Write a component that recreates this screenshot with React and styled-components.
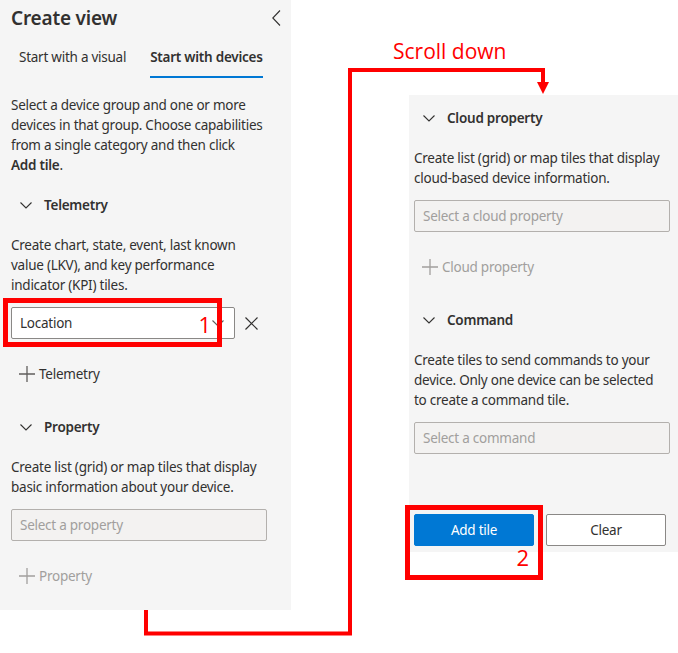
import styled, { createGlobalStyle } from 'styled-components'

const GlobalStyle = createGlobalStyle`
  html, body {
    margin: 0;
    padding: 0;
    background: #FFFFFF;
  }
  body {
    font-family: 'Noto Sans', 'Open Sans', sans-serif;
    color: #323130;
  }
`

const Canvas = styled.div`
  position: relative;
  width: 678px;
  height: 653px;
  display: flex;
  align-items: flex-start;
  overflow: hidden;
`

const LeftPanel = styled.div`
  width: 291px;
  height: 610px;
  background: #F5F5F5;
  padding: 0 10px 0 11px;
  box-sizing: border-box;
  display: flex;
  flex-direction: column;
`

const RightPanel = styled.div`
  width: 269px;
  height: 457px;
  margin-left: 118px;
  margin-top: 95px;
  background: #F5F5F5;
  padding: 0 8px 0 5px;
  box-sizing: border-box;
  display: flex;
  flex-direction: column;
`

const TitleRow = styled.div`
  height: 36px;
  display: flex;
  align-items: center;
  justify-content: space-between;
`

const Title = styled.div`
  font-size: 19px;
  font-weight: 600;
  letter-spacing: -0.2px;
  line-height: 24px;
  color: #323130;
`

const TabList = styled.div`
  margin-top: 4px;
  display: flex;
  gap: 24px;
  padding-left: 8px;
`

const Tab = styled.div`
  padding-top: 7px;
  padding-bottom: 9px;
  font-size: 13.5px;
  letter-spacing: -0.25px;
  line-height: 20px;
  font-weight: ${props => props.$active ? 600 : 400};
  border-bottom: 2px solid ${props => props.$active ? '#0078D4' : 'transparent'};
  white-space: nowrap;
`

const Text = styled.p`
  margin: ${props => props.$top || 10}px 0 0 0;
  font-size: 13.5px;
  letter-spacing: -0.25px;
  line-height: 20px;
  color: #323130;
  white-space: nowrap;

  b {
    font-weight: 600;
  }
`

const SectionHeader = styled.div`
  height: 40px;
  margin-top: ${props => props.$top ?? 10}px;
  display: flex;
  align-items: center;
  gap: 12px;
  padding-left: 9px;
  font-size: 13.5px;
  letter-spacing: -0.25px;
  font-weight: 600;
  color: #323130;
`

const ChevronBox = styled.div`
  width: 12px;
  display: flex;
  align-items: center;
`

const FieldRow = styled.div`
  position: relative;
  margin-top: 12px;
  display: flex;
  align-items: center;
  gap: 10px;
`

const Dropdown = styled.div`
  width: ${props => props.$width}px;
  height: 32px;
  box-sizing: border-box;
  border: 1px solid ${props => props.$disabled ? '#B3B0AD' : '#8A8886'};
  border-radius: 2px;
  background: ${props => props.$disabled ? '#F3F2F1' : '#FFFFFF'};
  color: ${props => props.$disabled ? '#A19F9D' : '#323130'};
  font-size: 13.5px;
  letter-spacing: -0.25px;
  display: flex;
  align-items: center;
  justify-content: space-between;
  padding: 0 10px 0 8px;
`

const AddRow = styled.div`
  height: 40px;
  margin-top: 15px;
  margin-bottom: 3px;
  padding-left: 8px;
  display: flex;
  align-items: center;
  gap: 4px;
  font-size: 13.5px;
  letter-spacing: -0.25px;
  color: ${props => props.$disabled ? '#A19F9D' : '#323130'};
`

const ButtonRow = styled.div`
  margin-top: 60px;
  display: flex;
  gap: 12px;
`

const ButtonWrap = styled.div`
  position: relative;
`

const Button = styled.div`
  width: 120px;
  height: 32px;
  box-sizing: border-box;
  border-radius: 2px;
  display: flex;
  align-items: center;
  justify-content: center;
  font-size: 13.5px;
  letter-spacing: -0.25px;
  background: ${props => props.$primary ? '#0078D4' : '#FFFFFF'};
  color: ${props => props.$primary ? '#FFFFFF' : '#323130'};
  border: 1px solid ${props => props.$primary ? '#0078D4' : '#8A8886'};
`

const Highlight = styled.div`
  position: absolute;
  left: ${props => props.$left}px;
  top: ${props => props.$top}px;
  width: ${props => props.$width}px;
  height: ${props => props.$height}px;
  border: 5px solid #FF0000;
  box-sizing: border-box;
  pointer-events: none;
`

const StepNumber = styled.span`
  position: absolute;
  right: ${props => props.$right}px;
  bottom: ${props => props.$bottom}px;
  font-family: 'Open Sans', sans-serif;
  font-size: 22px;
  line-height: 22px;
  color: #FF0000;
`

const Connector = styled.svg`
  position: absolute;
  left: 0;
  top: 0;
  pointer-events: none;
`

const Caption = styled.div`
  position: absolute;
  left: 393px;
  top: 37px;
  font-family: 'Open Sans', sans-serif;
  font-size: 21px;
  line-height: 28px;
  color: #FF0000;
`

const ChevronDown = ({ color = '#323130' }) => (
  <svg width="12" height="7" viewBox="0 0 12 7">
    <polyline points="0.5,0.5 6,6 11.5,0.5" fill="none" stroke={color} strokeWidth="1.1" />
  </svg>
)

const Plus = ({ color }) => (
  <svg width="16" height="16" viewBox="0 0 16 16">
    <path d="M8 0 V16 M0 8 H16" stroke={color} strokeWidth="1.3" fill="none" />
  </svg>
)

const Close = () => (
  <svg width="13" height="13" viewBox="0 0 13 13">
    <path d="M0.5 0.5 L12.5 12.5 M12.5 0.5 L0.5 12.5" stroke="#323130" strokeWidth="1.2" fill="none" />
  </svg>
)

const ChevronLeft = () => (
  <svg width="9" height="16" viewBox="0 0 9 16">
    <polyline points="8,0.5 0.8,8 8,15.5" fill="none" stroke="#323130" strokeWidth="1.1" />
  </svg>
)

const Section = ({ title, top, children }) => (
  <>
    <SectionHeader $top={top}>
      <ChevronBox><ChevronDown /></ChevronBox>
      {title}
    </SectionHeader>
    {children}
  </>
)

const AddLink = ({ label, disabled }) => (
  <AddRow $disabled={disabled}>
    <Plus color={disabled ? '#A19F9D' : '#605E5C'} />
    {label}
  </AddRow>
)

const App = () => {
  return (
    <>
      <GlobalStyle />
      <Canvas>
        <LeftPanel>
          <TitleRow>
            <Title>Create view</Title>
            <ChevronLeft />
          </TitleRow>
          <TabList>
            <Tab>Start with a visual</Tab>
            <Tab $active>Start with devices</Tab>
          </TabList>
          <Text $top={17}>
            Select a device group and one or more<br />
            devices in that group. Choose capabilities<br />
            from a single category and then click<br />
            <b>Add tile</b>.
          </Text>

          <Section title="Telemetry">
            <Text>
              Create chart, state, event, last known<br />
              value (LKV), and key performance<br />
              indicator (KPI) tiles.
            </Text>
            <FieldRow>
              <Dropdown $width={224}>
                Location
                <ChevronDown color="#605E5C" />
              </Dropdown>
              <Close />
              <Highlight $left={-8} $top={-9} $width={219} $height={49}>
                <StepNumber $right={6} $bottom={7}>1</StepNumber>
              </Highlight>
            </FieldRow>
            <AddLink label="Telemetry" />
          </Section>

          <Section title="Property">
            <Text>
              Create list (grid) or map tiles that display<br />
              basic information about your device.
            </Text>
            <FieldRow>
              <Dropdown $width={256} $disabled>Select a property</Dropdown>
            </FieldRow>
            <AddLink label="Property" disabled />
          </Section>
        </LeftPanel>

        <RightPanel>
          <Section title="Cloud property" top={3}>
            <Text>
              Create list (grid) or map tiles that display<br />
              cloud-based device information.
            </Text>
            <FieldRow>
              <Dropdown $width={256} $disabled>Select a cloud property</Dropdown>
            </FieldRow>
            <AddLink label="Cloud property" disabled />
          </Section>

          <Section title="Command">
            <Text>
              Create tiles to send commands to your<br />
              device. Only one device can be selected<br />
              to create a command tile.
            </Text>
            <FieldRow>
              <Dropdown $width={256} $disabled>Select a command</Dropdown>
            </FieldRow>
          </Section>

          <ButtonRow>
            <ButtonWrap>
              <Button $primary>Add tile</Button>
              <Highlight $left={-9} $top={-9} $width={138} $height={75}>
                <StepNumber $right={9} $bottom={7}>2</StepNumber>
              </Highlight>
            </ButtonWrap>
            <Button>Clear</Button>
          </ButtonRow>
        </RightPanel>

        <Caption>Scroll down</Caption>
        <Connector width="678" height="653" viewBox="0 0 678 653">
          <polyline points="146,610 146,633.5 350,633.5 350,70 543,70 543,84" fill="none" stroke="#FF0000" strokeWidth="4" />
          <polygon points="537,82 549,82 543,94" fill="#FF0000" />
        </Connector>
      </Canvas>
    </>
  )
}

export default App
